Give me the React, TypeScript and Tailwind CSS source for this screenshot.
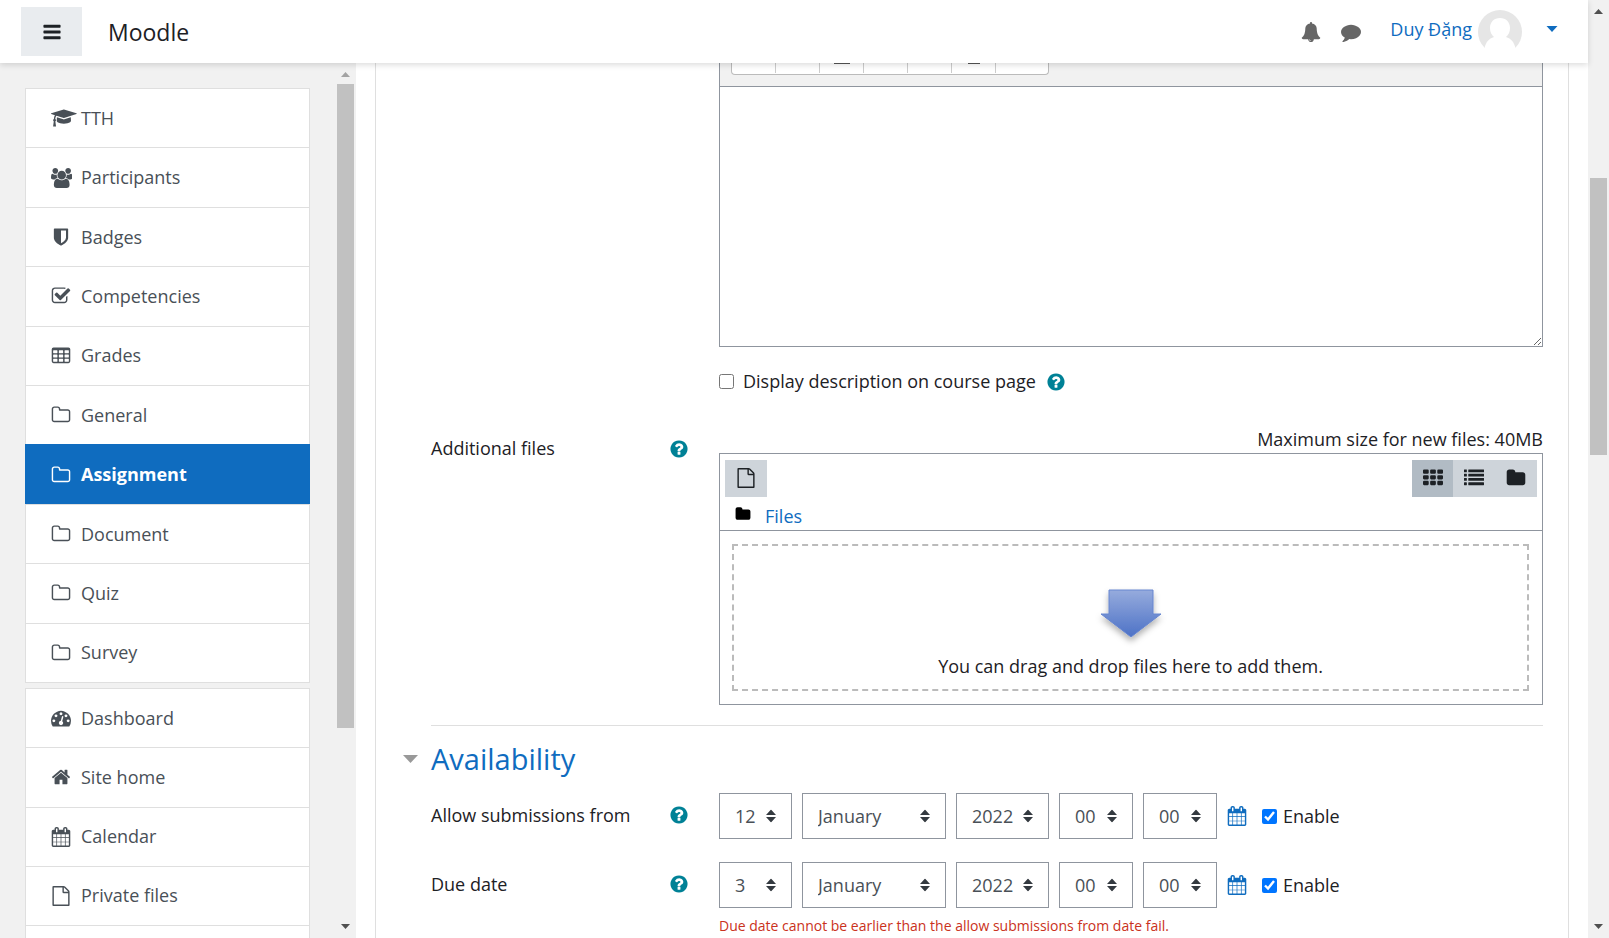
import React from "react";

type IconDef = { w?: number; d: string };

const rect = (x: number, y: number, w: number, h: number) => `M${x} ${y}h${w}v${h}h${-w}z`;

const dot = "q0-53-37.5-90.5t-90.5-37.5-90.5 37.5-37.5 90.5 37.5 90.5 90.5 37.5 90.5-37.5 37.5-90.5z";

const roundRect = (x: number, y: number, w: number, h: number, r: number) =>
  `M${x + r} ${y}h${w - 2 * r}a${r} ${r} 0 0 1 ${r} ${r}v${h - 2 * r}a${r} ${r} 0 0 1 ${-r} ${r}h${-(w - 2 * r)}a${r} ${r} 0 0 1 ${-r} ${-r}v${-(h - 2 * r)}a${r} ${r} 0 0 1 ${r} ${-r}z`;

const grid = (xs: number[], ys: number[], w: number, h: number, r: number) =>
  ys.map((y) => xs.map((x) => roundRect(x, y, w, h, r)).join("")).join("");

const icons: Record<string, IconDef> = {
  bars: { d: grid([128], [256, 768, 1280], 1536, 256, 64) },
  cap: {
    w: 2304,
    d: "M1774 836l18 316q4 69-82 128t-235 93.5-323 34.5-323-34.5-235-93.5-82-128l18-316 574 181q22 7 48 7t48-7zm530-324q0 23-22 31l-1120 352q-4 1-10 1t-10-1l-652-206q-43 34-71 111.5t-34 178.5q63 36 63 109 0 69-58 107l58 433q2 14-8 25-9 11-24 11h-192q-15 0-24-11-10-11-8-25l58-433q-58-38-58-107 0-73 65-111 11-207 98-330l-333-104q-22-8-22-31t22-31l1120-352q4-1 10-1t10 1l1120 352q22 8 22 31z",
  },
  users: {
    w: 1920,
    d: "M593 896q-162 5-265 128h-134q-82 0-138-40.5t-56-118.5q0-353 124-353 6 0 43.5 21t97.5 42.5 119 21.5q67 0 133-23-5 37-5 66 0 139 81 256zm1071 637q0 120-73 189.5t-194 69.5h-874q-121 0-194-69.5t-73-189.5q0-53 3.5-103.5t14-109 26.5-108.5 43-97.5 62-81 85.5-53.5 111.5-20q10 0 43 21.5t73 48 107 48 135 21.5 135-21.5 107-48 73-48 43-21.5q61 0 111.5 20t85.5 53.5 62 81 43 97.5 26.5 108.5 14 109 3.5 103.5zm-1024-1277q0 106-75 181t-181 75-181-75-75-181 75-181 181-75 181 75 75 181zm704 384q0 159-112.5 271.5t-271.5 112.5-271.5-112.5-112.5-271.5 112.5-271.5 271.5-112.5 271.5 112.5 112.5 271.5zm576 225q0 78-56 118.5t-138 40.5h-134q-103-123-265-128 81-117 81-256 0-29-5-66 66 23 133 23 59 0 119-21.5t97.5-42.5 43.5-21q124 0 124 353zm-128-609q0 106-75 181t-181 75-181-75-75-181 75-181 181-75 181 75 75 181z",
  },
  shield: {
    d: "M1344 960v-640h-448v1137q119-63 213-137 235-184 235-360zm192-768v768q0 86-33.5 170.5t-83 150-118 127.5-126.5 103-121 77.5-89.5 49.5-42.5 20q-12 6-26 6t-26-6q-16-7-42.5-20t-89.5-49.5-121-77.5-126.5-103-118-127.5-83-150-33.5-170.5v-768q0-26 19-45t45-19h1152q26 0 45 19t19 45z",
  },
  check: {
    d: "M1472 930v318q0 119-84.5 203.5t-203.5 84.5h-832q-119 0-203.5-84.5t-84.5-203.5v-832q0-119 84.5-203.5t203.5-84.5h832q63 0 117 25 15 7 18 23 3 17-9 29l-49 49q-10 10-23 10-3 0-9-2-23-6-45-6h-832q-66 0-113 47t-47 113v832q0 66 47 113t113 47h832q66 0 113-47t47-113v-254q0-13 9-22l64-64q10-10 23-10 6 0 12 3 20 8 20 29zm231-489l-814 814q-24 24-57 24t-57-24l-430-430q-24-24-24-57t24-57l110-110q24-24 57-24t57 24l263 263 647-647q24-24 57-24t57 24l110 110q24 24 24 57t-24 57z",
  },
  table: { d: roundRect(64, 128, 1664, 1408, 160) + grid([192, 704, 1216], [384, 768, 1152], 384, 256, 32) },
  folderOpen: {
    d: "M1600 1312v-704q0-40-28-68t-68-28h-704q-40 0-68-28t-28-68v-64q0-40-28-68t-68-28h-320q-40 0-68 28t-28 68v960q0 40 28 68t68 28h1216q40 0 68-28t28-68zm128-704v704q0 92-66 158t-158 66h-1216q-92 0-158-66t-66-158v-960q0-92 66-158t158-66h320q92 0 158 66t66 158v32h672q92 0 158 66t66 158z",
  },
  folder: {
    d: "M1728 608v704q0 92-66 158t-158 66h-1216q-92 0-158-66t-66-158v-960q0-92 66-158t158-66h320q92 0 158 66t66 158v32h672q92 0 158 66t66 158z",
  },
  gauge: {
    d:
      "M384 1152" + dot + "M576 704" + dot +
      "M1004 1185l101-382q6-26-7.5-48.5t-38.5-29.5-48 6.5-30 39.5l-101 382q-60 5-107 43.5t-63 98.5q-20 77 20 146t117 89 146-20 89-117q16-60-6-117t-72-91z" +
      "M1664 1152" + dot + "M1024 512" + dot + "M1472 704" + dot +
      "M1792 1152q0 261-141 483-19 29-54 29h-1402q-35 0-54-29-141-221-141-483 0-182 71-348t191-286 286-191 348-71 348 71 286 191 191 286 71 348z",
  },
  home: {
    d: "M1472 992v480q0 26-19 45t-45 19h-384v-384h-256v384h-384q-26 0-45-19t-19-45v-480q0-1 .5-3t.5-3l575-474 575 474q1 2 1 6zm223-69l-62 74q-8 9-21 11h-3q-13 0-21-7l-692-577-692 577q-12 8-24 7-13-2-21-11l-62-74q-8-10-7-23.5t11-21.5l719-599q32-26 76-26t76 26l244 204v-195q0-14 9-23t23-9h192q14 0 23 9t9 23v408l219 182q10 8 11 21.5t-7 23.5z",
  },
  calendar: {
    d:
      "M1728 384v1280q0 52-38 90t-90 38h-1408q-52 0-90-38t-38-90v-1280q0-52 38-90t90-38h128v-96q0-66 47-113t113-47h64q66 0 113 47t47 113v96h384v-96q0-66 47-113t113-47h64q66 0 113 47t47 113v96h128q52 0 90 38t38 90z" +
      [[192, 288], [544, 320], [928, 320], [1312, 288]]
        .map(([x, w]) => rect(x, 640, w, 288) + rect(x, 992, w, 320) + rect(x, 1376, w, 288))
        .join("") +
      roundRect(448, 128, 128, 352, 32) + roundRect(1216, 128, 128, 352, 32),
  },
  file: {
    d: "M1596 380q28 28 48 76t20 88v1152q0 40-28 68t-68 28h-1344q-40 0-68-28t-28-68v-1600q0-40 28-68t68-28h896q40 0 88 20t76 48zm-444-244v376h376q-10-29-22-41l-313-313q-12-12-41-22zm384 1528v-1024h-416q-40 0-68-28t-28-68v-416h-768v1536h1280z",
  },
  help: {
    d: "M1024 1376v-192q0-14-9-23t-23-9h-192q-14 0-23 9t-9 23v192q0 14 9 23t23 9h192q14 0 23-9t9-23zm256-672q0-88-55.5-163t-138.5-116-170-41q-243 0-371 213-15 24 8 42l132 100q7 6 19 6 16 0 25-12 53-68 86-92 34-24 86-24 48 0 85.5 26t37.5 59q0 38-20 61t-68 45q-63 28-115.5 86.5t-52.5 125.5v36q0 14 9 23t23 9h192q14 0 23-9t9-23q0-19 21.5-49.5t54.5-49.5q32-18 49-28.5t46-35 44.5-48 28-60.5 12.5-81zm384 192q0 209-103 385.5t-279.5 279.5-385.5 103-385.5-103-279.5-279.5-103-385.5 103-385.5 279.5-279.5 385.5-103 385.5 103 279.5 279.5 103 385.5z",
  },
  comment: {
    d: "M1792 896q0 174-120 321.5t-326 233-450 85.5q-70 0-145-8-198 175-460 242-49 14-114 22-17 2-30.5-9t-17.5-29v-1q-3-4-.5-12t2-10 4.5-9.5l6-9 7-8.5 8-9q7-8 31-34.5t34.5-38 31-39.5 32.5-51 27-59 26-76q-157-89-247.5-220t-90.5-281q0-130 71-248.5t191-204.5 286-136.5 348-50.5 348 50.5 286 136.5 191 204.5 71 248.5z",
  },
  bell: {
    d: "M912 1696q0-16-16-16-59 0-101.5-42.5t-42.5-101.5q0-16-16-16t-16 16q0 73 51.5 124.5t124.5 51.5q16 0 16-16zm816-288q0 52-38 90t-90 38h-448q0 106-75 181t-181 75-181-75-75-181h-448q-52 0-90-38t-38-90q50-42 91-88t85-119.5 74.5-158.5 50-206 19.5-260q0-152 117-282.5t307-158.5q-8-19-8-39 0-40 28-68t68-28 68 28 28 68q0 20-8 39 190 28 307 158.5t117 282.5q0 139 19.5 260t50 206 74.5 158.5 85 119.5 91 88z",
  },
  th: { d: grid([0, 640, 1280], [128, 640, 1152], 512, 384, 96) },
  list: { d: grid([0], [128, 512, 896, 1280], 256, 256, 32) + grid([384], [128, 512, 896, 1280], 1408, 256, 32) },
};

function Icon({ name, className = "h-5" }: { name: string; className?: string }) {
  const { w = 1792, d } = icons[name];
  return (
    <svg aria-hidden="true" viewBox={`0 0 ${w} 1792`} className={`w-auto max-w-none shrink-0 fill-current ${className}`}>
      <path fillRule="evenodd" d={d} />
    </svg>
  );
}

type NavItem = { label: string; icon: string; active?: boolean };

const courseNav: NavItem[] = [
  { label: "TTH", icon: "cap" },
  { label: "Participants", icon: "users" },
  { label: "Badges", icon: "shield" },
  { label: "Competencies", icon: "check" },
  { label: "Grades", icon: "table" },
  { label: "General", icon: "folderOpen" },
  { label: "Assignment", icon: "folderOpen", active: true },
  { label: "Document", icon: "folderOpen" },
  { label: "Quiz", icon: "folderOpen" },
  { label: "Survey", icon: "folderOpen" },
];

const siteNav: NavItem[] = [
  { label: "Dashboard", icon: "gauge" },
  { label: "Site home", icon: "home" },
  { label: "Calendar", icon: "calendar" },
  { label: "Private files", icon: "file" },
];

function NavGroup({ items, label, className }: { items: NavItem[]; label: string; className: string }) {
  return (
    <nav aria-label={label} className={`flex shrink-0 flex-col border-b border-[#dfdfdf] ${className}`}>
      {items.map((item) => (
        <a
          key={item.label}
          href="#"
          aria-current={item.active ? "page" : undefined}
          className={`flex flex-1 items-center gap-[10px] border-x border-t pl-[25px] ${
            item.active
              ? "border-[#0f6cbf] bg-[#0f6cbf] font-bold text-white"
              : "border-[#dfdfdf] bg-white text-[#495057]"
          }`}
        >
          <span className="flex w-5">
            <Icon name={item.icon} />
          </span>
          {item.label}
        </a>
      ))}
    </nav>
  );
}

function ScrollArrow({ up, className = "" }: { up?: boolean; className?: string }) {
  return (
    <svg aria-hidden="true" viewBox="0 0 9 5" className={`h-[5px] w-[9px] shrink-0 fill-current ${className}`}>
      <path d={up ? "M4.5 0L9 5H0z" : "M0 0h9L4.5 5z"} />
    </svg>
  );
}

function HelpButton({ topic }: { topic: string }) {
  return (
    <button type="button" aria-label={`Help with ${topic}`} className="flex text-[#008196]">
      <Icon name="help" />
    </button>
  );
}

function Select({ label, value, className }: { label: string; value: string; className: string }) {
  return (
    <span className={`relative ${className}`}>
      <select
        aria-label={label}
        defaultValue={value}
        className="h-[46px] w-full appearance-none border border-[#8f959e] bg-white pl-[15px] text-[#495057]"
      >
        <option>{value}</option>
      </select>
      <svg
        aria-hidden="true"
        viewBox="0 0 10 13"
        className="pointer-events-none absolute top-1/2 right-4 h-[13px] w-[10px] -translate-y-1/2 fill-[#343a40]"
      >
        <path d="M5 0l5 5.5H0zM0 7.5h10L5 13z" />
      </svg>
    </span>
  );
}

function DateRow({ label, day, error }: { label: string; day: string; error?: string }) {
  const id = label.toLowerCase().replace(/ /g, "-");
  return (
    <div role="group" aria-labelledby={id} className="grid grid-cols-[288px_1fr]">
      <div className="flex h-[44px] items-center justify-between pr-[30px]">
        <span id={id}>{label}</span>
        <HelpButton topic={label} />
      </div>
      <div>
        <div className="flex items-center gap-[10px]">
          <Select label="Day" value={day} className="w-[73px]" />
          <Select label="Month" value="January" className="w-[144px]" />
          <Select label="Year" value="2022" className="w-[93px]" />
          <Select label="Hour" value="00" className="w-[74px]" />
          <Select label="Minute" value="00" className="w-[74px]" />
          <button type="button" aria-label="Open calendar" className="flex text-[#0f6cbf]">
            <Icon name="calendar" />
          </button>
          <label className="ml-[5px] flex items-center gap-[6px]">
            <input type="checkbox" defaultChecked className="size-[15px] accent-[#0075ff]" />
            Enable
          </label>
        </div>
        {error && <p className="pt-2 text-[14px] leading-5 text-[#ca3120]">{error}</p>}
      </div>
    </div>
  );
}

function Header() {
  return (
    <header className="relative z-10 flex h-[63px] shrink-0 items-center bg-white pl-[21px] shadow-[0_2px_6px_rgba(0,0,0,0.14)]">
      <button
        type="button"
        aria-label="Side panel"
        className="flex h-[49px] w-[61px] items-center justify-center bg-[#e9ecef] text-[#1d2125]"
      >
        <Icon name="bars" />
      </button>
      <a href="#" className="ml-[26px] pt-[2px] text-[23px]">
        Moodle
      </a>
      <div className="ml-auto flex items-center text-[#666]">
        <button type="button" aria-label="Notifications" className="flex">
          <Icon name="bell" />
        </button>
        <button type="button" aria-label="Messages" className="ml-5 flex">
          <Icon name="comment" />
        </button>
        <button type="button" className="ml-[29px] flex items-center text-[#0f6cbf]">
          <span className="pb-1">Duy Đặng</span>
          <svg aria-hidden="true" viewBox="0 0 44 44" className="ml-[6px] size-[44px]">
            <circle cx="22" cy="22" r="22" fill="#e6e6e6" />
            <path
              fill="#fff"
              d="M22 8c6 0 10 4 10 10 0 4-1.500 7-4 9 5 1.500 8.500 5.500 9.500 11.500L38 44H6l.500-5.500C7.500 32.500 11 28.500 16 27c-2.500-2-4-5-4-9 0-6 4-10 10-10z"
            />
          </svg>
          <span className="mr-[30px] ml-[24px] pb-[5px]">
            <svg aria-hidden="true" viewBox="0 0 12 6" className="h-[6px] w-3 fill-current">
              <path d="M.5 0h11L6 6z" />
            </svg>
          </span>
        </button>
      </div>
    </header>
  );
}

function Sidebar() {
  return (
    <aside className="flex w-[356px] shrink-0 bg-[#f1f1f1]">
      <div className="flex min-w-0 flex-1 flex-col overflow-hidden px-[25px] pt-[25px]">
        <NavGroup items={courseNav} label="Course" className="mb-[5px] h-[595px]" />
        <NavGroup items={siteNav} label="Site" className="h-[238px]" />
        <div className="flex-1 border-x border-[#dfdfdf] bg-white" />
      </div>
      <div aria-hidden="true" className="flex w-[21px] flex-col items-center pt-[9px] pb-[9px]">
        <ScrollArrow up className="text-[#a3a3a3]" />
        <div className="mt-[7px] h-[644px] w-[17px] bg-[#c1c1c1]" />
        <ScrollArrow className="mt-auto text-[#505050]" />
      </div>
    </aside>
  );
}

function Editor() {
  return (
    <div className="border-x border-[#8f959e]">
      <div className="h-6 border-b border-[#8f959e] bg-[#f1f1f1] pl-[11px]">
        <div className="flex h-3 w-[318px] rounded-b-[4px] border-x border-b border-[#bbb] bg-white">
          {["Bullets", "Numbering", "Underline", "Indent", "Link", "Image", "Media"].map((name, i) => (
            <button
              key={name}
              type="button"
              aria-label={name}
              className={`flex h-[10px] justify-center ${i < 6 ? "w-11 border-r border-[#ccc]" : "flex-1"}`}
            >
              {i === 2 && <span className="h-px w-4 bg-[#555]" />}
              {i === 5 && <span className="h-px w-3 bg-[#555]" />}
            </button>
          ))}
        </div>
      </div>
      <textarea
        aria-label="Description"
        className="block h-[260px] w-full resize border-b border-[#8f959e] bg-white"
      />
    </div>
  );
}

function FileManager() {
  return (
    <div>
      <p className="pb-[2px] text-right leading-[24px]">Maximum size for new files: 40MB</p>
      <div className="border border-[#8f959e]">
        <div className="flex justify-between px-[5px] pt-[6px]">
          <button
            type="button"
            aria-label="Add file"
            className="flex h-[37px] w-[42px] items-center justify-center bg-[#ced4da] pb-px text-[#1d2125]"
          >
            <Icon name="file" />
          </button>
          <div className="flex text-[#1d2125]">
            <button type="button" aria-label="Icons" className="flex h-[37px] w-[41px] items-center justify-center bg-[#b1bbc4] pb-px">
              <Icon name="th" />
            </button>
            <button type="button" aria-label="Details" className="flex h-[37px] w-[42px] items-center justify-center bg-[#ced4da] pb-px">
              <Icon name="list" />
            </button>
            <button type="button" aria-label="Tree" className="flex h-[37px] w-[42px] items-center justify-center bg-[#ced4da] pb-px">
              <Icon name="folder" />
            </button>
          </div>
        </div>
        <div className="flex h-[34px] items-center gap-[14px] border-b border-[#8f959e] pt-[6px] pl-[15px]">
          <span className="flex pb-[6px] text-black">
            <Icon name="folder" className="h-4" />
          </span>
          <a href="#" className="text-[#0f6cbf]">
            Files
          </a>
        </div>
        <div className="py-[13px] pr-[13px] pl-[12px]">
          <div className="flex h-[147px] flex-col items-center border-2 border-dashed border-[#bbb] pt-[40px]">
            <svg aria-hidden="true" viewBox="0 0 72 64" className="h-16 w-[72px]">
              <defs>
                <linearGradient id="arrow-fill" x1="0" y1="0" x2="0" y2="1">
                  <stop offset="0" stopColor="#96abdd" />
                  <stop offset="1" stopColor="#4d72c6" />
                </linearGradient>
                <filter id="arrow-shadow" x="-20%" y="-20%" width="140%" height="150%">
                  <feDropShadow dx="0" dy="4" stdDeviation="3" floodOpacity="0.3" />
                </filter>
              </defs>
              <path
                d="M14 4h44v24h8L36 51 6 28h8z"
                fill="url(#arrow-fill)"
                stroke="#6685cf"
                filter="url(#arrow-shadow)"
              />
            </svg>
            <p className="mt-1 leading-6">You can drag and drop files here to add them.</p>
          </div>
        </div>
      </div>
    </div>
  );
}

export default function App() {
  return (
    <div className="flex h-screen overflow-hidden bg-white font-['Open_Sans','Noto_Sans',sans-serif] text-[18px] leading-[27px] text-[#1d2125]">
      <div className="flex min-w-0 flex-1 flex-col">
        <Header />
        <div className="flex min-h-0 flex-1">
          <Sidebar />
          <main className="mr-[19px] ml-[19px] min-w-0 flex-1 overflow-hidden border-x border-[#dfdfdf] pr-[25px] pl-[55px]">
            <form>
              <div className="grid grid-cols-[288px_1fr]">
                <div className="col-start-2">
                  <Editor />
                  <div className="flex h-[69px] items-center gap-[10px]">
                    <label className="flex items-center gap-[9px]">
                      <input type="checkbox" className="size-[15px]" />
                      Display description on course page
                    </label>
                    <HelpButton topic="Display description" />
                  </div>
                </div>
                <div className="mt-[11px] flex h-[43px] items-center justify-between pr-[30px]">
                  <span>Additional files</span>
                  <HelpButton topic="Additional files" />
                </div>
                <div className="mt-[11px]">
                  <FileManager />
                </div>
              </div>
              <section className="mt-5 border-t border-[#dfdfdf] pt-3">
                <h2 className="-ml-[28px] text-[29px] leading-[42px] text-[#0f6cbf]">
                  <button type="button" aria-expanded="true" className="flex items-center gap-[13px]">
                    <svg aria-hidden="true" viewBox="0 0 15 8" className="h-2 w-[15px] fill-[#999]">
                      <path d="M0 0h15L7.500 8z" />
                    </svg>
                    Availability
                  </button>
                </h2>
                <div className="flex flex-col gap-[23px] pt-[13px]">
                  <DateRow label="Allow submissions from" day="12" />
                  <DateRow
                    label="Due date"
                    day="3"
                    error="Due date cannot be earlier than the allow submissions from date fail."
                  />
                </div>
              </section>
            </form>
          </main>
        </div>
      </div>
      <div aria-hidden="true" className="flex w-[21px] shrink-0 flex-col items-center bg-[#f1f1f1] py-[9px] text-[#505050]">
        <ScrollArrow up />
        <div className="mt-[164px] h-[277px] w-[17px] bg-[#c1c1c1]" />
        <ScrollArrow className="mt-auto" />
      </div>
    </div>
  );
}
